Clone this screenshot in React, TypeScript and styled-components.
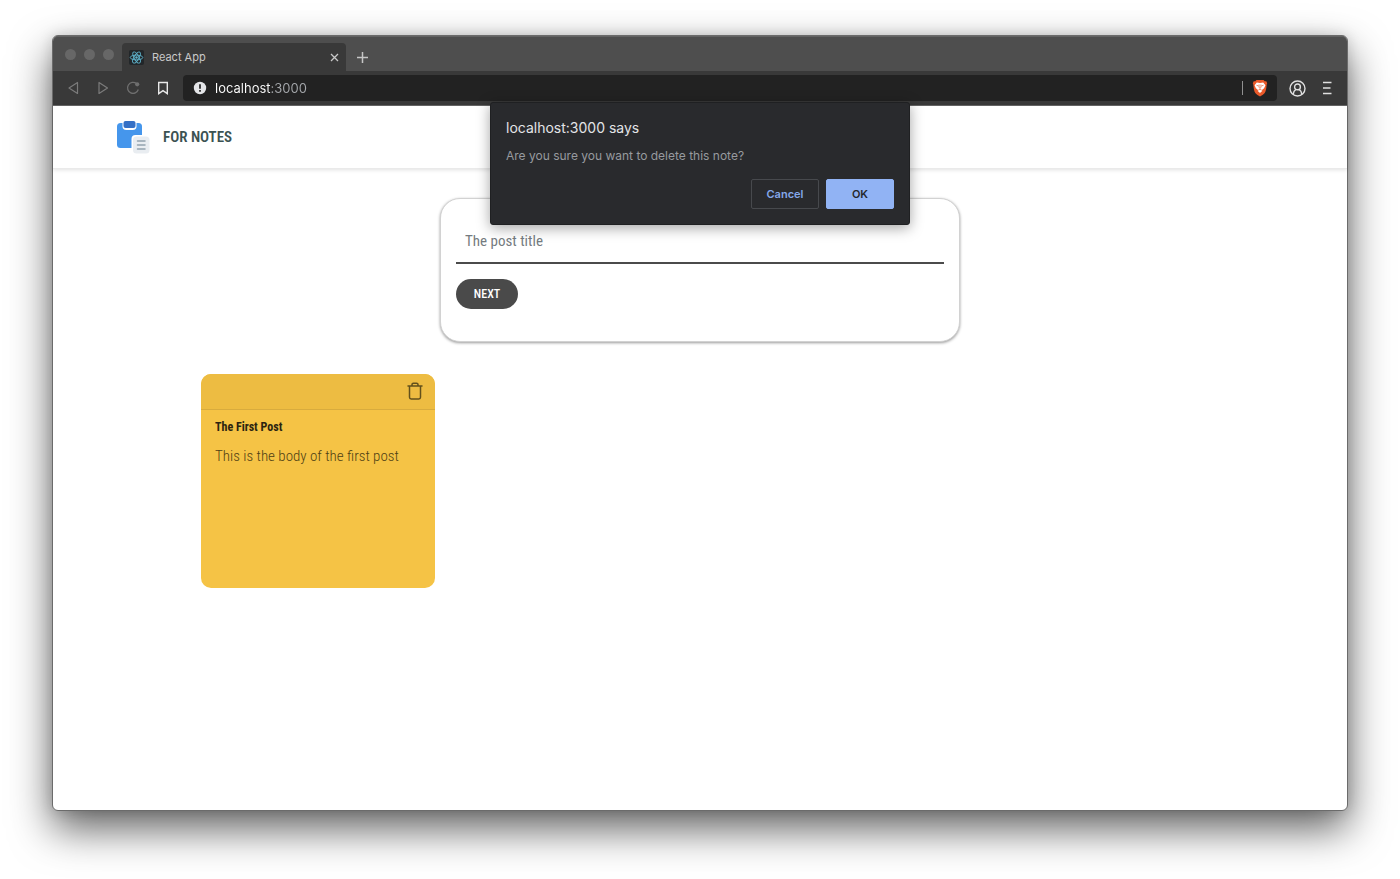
import React from 'react';
import styled, { createGlobalStyle } from 'styled-components';

const ui = `Inter, "Liberation Sans", sans-serif`;
const condensed = `"Roboto Condensed", "Liberation Sans Narrow", Roboto, sans-serif`;

const GlobalStyle = createGlobalStyle`
  *, *::before, *::after { box-sizing: border-box; }
  body { margin: 0; background: #fff; font-family: ${ui}; }
  h1, h2, p { margin: 0; }
  svg { display: block; flex: none; }
`;

const Desktop = styled.div`
  display: flex;
  min-height: 100vh;
  padding: 35px 52px 68px;
  overflow: hidden;
`;

const Window = styled.div`
  flex: 1;
  display: flex;
  flex-direction: column;
  min-width: 0;
  border: 1px solid #6b6b6b;
  border-radius: 6px;
  background: #fff;
  box-shadow: 0 18px 42px rgba(0, 0, 0, 0.62), 0 0 14px rgba(0, 0, 0, 0.14);
`;

const TabStrip = styled.div`
  display: flex;
  height: 35px;
  padding-left: 12px;
  border-radius: 5px 5px 0 0;
  background: #4e4e4e;
  box-shadow: inset 0 1px #636363;
`;

const Lights = styled.div`
  display: flex;
  gap: 8px;
  width: 57px;
  padding-top: 13px;
`;

const Light = styled.span`
  width: 11px;
  height: 11px;
  border-radius: 50%;
  background: #676767;
`;

const Tab = styled.div`
  display: flex;
  align-items: center;
  width: 224px;
  height: 28px;
  margin-top: 7px;
  padding: 0 6px 0 7px;
  border-radius: 4px 4px 0 0;
  background: #393939;
  color: #c9c9c9;
  font-size: 11px;
`;

const TabTitle = styled.span`
  flex: 1;
  padding-left: 8px;
`;

const IconButton = styled.button`
  display: flex;
  padding: 0;
  border: 0;
  background: none;
  color: inherit;
`;

const NewTab = styled(IconButton)`
  align-items: center;
  margin-top: 7px;
  padding-left: 10px;
  color: #c6c6c6;
`;

const Toolbar = styled.div`
  display: flex;
  align-items: center;
  height: 35px;
  padding: 0 13px;
  border-bottom: 1px solid #666;
  background: #393939;
  color: #e0e0e0;
`;

const NavButtons = styled.div`
  display: flex;
  gap: 16px;
  width: 117px;
`;

const AddressBar = styled.div`
  flex: 1;
  display: flex;
  align-items: center;
  height: 26px;
  padding: 0 9px 0 10px;
  border-radius: 4px;
  background: #222;
`;

const Address = styled.input`
  flex: 1;
  min-width: 0;
  height: 16px;
  margin: 0 0 0 8px;
  padding: 0;
  border: 0;
  outline: 0;
  background: linear-gradient(90deg, #fff 56px, #a6a9ad 56px);
  background-clip: text;
  color: transparent;
  font: 400 13px/16px ${ui};
`;

const Divider = styled.span`
  width: 1px;
  height: 14px;
  margin-right: 9px;
  background: #909090;
`;

const Menus = styled.div`
  display: flex;
  align-items: center;
  gap: 14px;
  padding-left: 12px;
`;

const Viewport = styled.div`
  position: relative;
  flex: 1;
`;

const Header = styled.header`
  display: flex;
  align-items: center;
  gap: 12px;
  height: 63px;
  padding: 0 64px;
  border-bottom: 1px solid #eaeaea;
  box-shadow: 0 1px 4px rgba(0, 0, 0, 0.12);
`;

const Brand = styled.h1`
  color: #3b5252;
  font: 600 15px/20px ${condensed};
`;

const Composer = styled.form`
  max-width: 520px;
  height: 144px;
  margin: 29px auto 32px;
  padding: 19px 15px;
  border: 1px solid #d2d2d2;
  border-radius: 20px;
  background: #fff;
  box-shadow: 0 1px 3px rgba(0, 0, 0, 0.4);
`;

const TitleInput = styled.input`
  display: block;
  width: 100%;
  height: 46px;
  margin: 0;
  padding: 2px 9px 0;
  border: 0;
  border-bottom: 2px solid #4b4b4b;
  outline: 0;
  background: none;
  font: 400 15px/20px ${condensed};
  &::placeholder { color: #757b80; opacity: 1; }
`;

const NextButton = styled.button`
  width: 62px;
  height: 30px;
  margin: 15px 0 0;
  padding: 0;
  border: 0;
  border-radius: 15px;
  background: #4a4a4a;
  color: #fff;
  font: 500 12px/16px ${condensed};
`;

const Notes = styled.main`
  display: flex;
  flex-wrap: wrap;
  gap: 16px;
  max-width: 998px;
  margin: 0 auto;
`;

const Note = styled.article`
  width: 234px;
  height: 214px;
  border-radius: 10px;
  background: #f5c345;
  overflow: hidden;
`;

const NoteBar = styled.div`
  display: flex;
  justify-content: flex-end;
  height: 36px;
  padding: 8px 12px 0 0;
  border-bottom: 1px solid #d8ab3d;
  background: #edbc42;
  color: #62501c;
`;

const NoteBody = styled.div`
  padding: 8px 14px;
`;

const NoteTitle = styled.h2`
  color: #2c2410;
  font: 700 12px/18px ${condensed};
`;

const NoteText = styled.p`
  padding-top: 10px;
  color: #4f3f14;
  font: 300 15px/20px ${condensed};
`;

const Dialog = styled.div`
  position: absolute;
  top: -4px;
  left: 50%;
  width: 420px;
  margin-left: -210px;
  padding: 15px;
  border: 1px solid #1f2022;
  border-radius: 3px;
  background: #292a2d;
  box-shadow: 0 3px 14px rgba(0, 0, 0, 0.36);
`;

const DialogTitle = styled.h2`
  color: #e3e4e7;
  font: 400 14px/20px ${ui};
`;

const DialogText = styled.p`
  padding-top: 10px;
  color: #979a9f;
  font-size: 12px;
  line-height: 16px;
`;

const Actions = styled.div`
  display: flex;
  justify-content: flex-end;
  gap: 7px;
  padding-top: 15px;
`;

const Action = styled.button<{ $primary?: boolean }>`
  width: 68px;
  height: 30px;
  margin: 0;
  padding: 0;
  border: 1px solid ${p => (p.$primary ? '#91b3f4' : '#47494d')};
  border-radius: 2px;
  background: ${p => (p.$primary ? '#91b3f4' : 'transparent')};
  color: ${p => (p.$primary ? '#25282d' : '#85a8ea')};
  font: 600 11px/16px ${ui};
`;

const ReactMark = () => (
  <svg width="15" height="15" viewBox="0 0 15 15" fill="none" stroke="#5fb3cc" strokeWidth="0.9">
    <rect width="15" height="15" rx="2" fill="#222629" stroke="none" />
    <ellipse cx="7.5" cy="7.5" rx="6.3" ry="2.4" />
    <ellipse cx="7.5" cy="7.5" rx="6.3" ry="2.4" transform="rotate(60 7.5 7.5)" />
    <ellipse cx="7.5" cy="7.5" rx="6.3" ry="2.4" transform="rotate(120 7.5 7.5)" />
    <circle cx="7.5" cy="7.5" r="1.2" fill="#5fb3cc" stroke="none" />
  </svg>
);

const Logo = () => (
  <svg width="34" height="34" viewBox="0 -1 34 34">
    <rect x="0" y="2" width="25" height="25" rx="3.5" fill="#4596ec" />
    <path d="M5.500 1.500h14v3.700a3.800 3.800 0 0 1-3.800 3.800H9.300a3.800 3.800 0 0 1-3.800-3.800z" fill="#fff" />
    <rect x="6.500" y="0" width="12" height="7" rx="2" fill="#3470c6" />
    <path d="M14.500 33V18a4 4 0 0 1 4-4H34v19z" fill="#fff" />
    <rect x="16" y="15.500" width="16.500" height="17" rx="3.500" fill="#e9edf1" />
    <path d="M20.500 20h7.500M20.500 24h7.500M20.500 28h7.500" stroke="#93a3ae" strokeWidth="1.500" strokeLinecap="round" />
  </svg>
);

const BraveMark = () => (
  <svg width="16" height="18" viewBox="0 0 16 18">
    <path d="M4.500 1h7l1.300 1.300 1.500-.1.900 2-.5 1.300c-.3 3.500-.8 6.700-2 8.500C11.600 15.400 9.500 16.700 8 17.400 6.500 16.700 4.400 15.400 3.300 14 2.100 12.200 1.600 9 1.300 5.500L.8 4.200l.9-2 1.500.1z" fill="#ea5a2a" />
    <path d="M4.800 3.500 8 3.900l3.200-.4 2.200 2.700-1.300 3-2.100 1.900.2 1L8 13.900l-2.200-1.800.2-1-2.100-1.900-1.300-3z" fill="#fff" />
    <path d="m4.500 6.300 2 .6M11.500 6.300l-2 .6M7.100 5.500l-.1 3 1 .9 1-.9-.1-3M6.300 11.100 8 10.400l1.700.7" fill="none" stroke="#ea5a2a" strokeWidth="0.700" />
  </svg>
);

const Trash = () => (
  <svg width="16" height="18" viewBox="0 0 16 18" fill="none" stroke="currentColor" strokeWidth="1.500" strokeLinecap="round" strokeLinejoin="round">
    <path d="M1 4h14M2.500 4v11.200c0 1 .7 1.700 1.700 1.700h7.600c1 0 1.700-.7 1.700-1.700V4M5 3.800V2.600c0-.9.500-1.400 1.400-1.400h3.200c.9 0 1.400.5 1.400 1.400v1.200" />
  </svg>
);

export default function App() {
  return (
    <>
      <GlobalStyle />
      <Desktop>
        <Window>
          <TabStrip>
            <Lights><Light /><Light /><Light /></Lights>
            <Tab>
              <ReactMark />
              <TabTitle>React App</TabTitle>
              <IconButton aria-label="Close tab">
                <svg width="11" height="11" viewBox="0 0 11 11" stroke="currentColor" strokeWidth="1.300"><path d="m2 2 7 7M9 2 2 9" /></svg>
              </IconButton>
            </Tab>
            <NewTab aria-label="New tab">
              <svg width="13" height="13" viewBox="0 0 13 13" stroke="currentColor" strokeWidth="1.500"><path d="M6.500 1v11M1 6.500h11" /></svg>
            </NewTab>
          </TabStrip>
          <Toolbar>
            <NavButtons>
              <IconButton aria-label="Back">
                <svg width="14" height="14" viewBox="0 0 14 14" fill="none" stroke="#7b7b7b" strokeWidth="1.200" strokeLinejoin="round"><path d="M11.500 1.500v11L3 7z" /></svg>
              </IconButton>
              <IconButton aria-label="Forward">
                <svg width="14" height="14" viewBox="0 0 14 14" fill="none" stroke="#7b7b7b" strokeWidth="1.200" strokeLinejoin="round"><path d="M3 1.500v11L11.500 7z" /></svg>
              </IconButton>
              <IconButton aria-label="Reload">
                <svg width="14" height="14" viewBox="0 0 14 14" fill="none" stroke="#6f6f6f" strokeWidth="1.300"><path d="M10.500 2.600A5.500 5.500 0 1 0 12.300 8.500" /><circle cx="11.200" cy="3.300" r="2.100" fill="#6f6f6f" stroke="none" /></svg>
              </IconButton>
              <IconButton aria-label="Bookmark">
                <svg width="14" height="14" viewBox="0 0 14 14" fill="none" stroke="#e8e8e8" strokeWidth="1.400"><path d="M2.700 1.500h8.600v11.100L7 9.600l-4.300 3z" /></svg>
              </IconButton>
            </NavButtons>
            <AddressBar>
              <svg width="14" height="14" viewBox="0 0 14 14"><circle cx="7" cy="7" r="6.200" fill="#e4e5e8" /><path d="M7 3.200v4.600M7 9.100v1.700" stroke="#222" strokeWidth="1.700" /></svg>
              <Address aria-label="Address" defaultValue="localhost:3000" />
              <Divider />
              <BraveMark />
            </AddressBar>
            <Menus>
              <IconButton aria-label="Profile">
                <svg width="17" height="17" viewBox="0 0 17 17" fill="none" stroke="currentColor" strokeWidth="1.400"><circle cx="8.500" cy="8.500" r="7.500" /><circle cx="8.500" cy="6.900" r="2.900" /><path d="M4.200 14.400c.2-2.700 1.200-4 2.700-5M12.800 14.400c-.2-2.700-1.200-4-2.700-5" /></svg>
              </IconButton>
              <IconButton aria-label="Menu">
                <svg width="14" height="14" viewBox="0 0 14 14" stroke="currentColor" strokeWidth="1.300"><path d="M3 1.500h8.500M3 7h7.500M3 12.500h8.500" /></svg>
              </IconButton>
            </Menus>
          </Toolbar>
          <Viewport>
            <Header>
              <Logo />
              <Brand>FOR NOTES</Brand>
            </Header>
            <Composer>
              <TitleInput aria-label="The post title" placeholder="The post title" />
              <NextButton type="button">NEXT</NextButton>
            </Composer>
            <Notes>
              <Note>
                <NoteBar>
                  <IconButton aria-label="Delete note"><Trash /></IconButton>
                </NoteBar>
                <NoteBody>
                  <NoteTitle>The First Post</NoteTitle>
                  <NoteText>This is the body of the first post</NoteText>
                </NoteBody>
              </Note>
            </Notes>
            <Dialog role="alertdialog" aria-labelledby="dialog-title">
              <DialogTitle id="dialog-title">localhost:3000 says</DialogTitle>
              <DialogText>Are you sure you want to delete this note?</DialogText>
              <Actions>
                <Action>Cancel</Action>
                <Action $primary>OK</Action>
              </Actions>
            </Dialog>
          </Viewport>
        </Window>
      </Desktop>
    </>
  );
}
